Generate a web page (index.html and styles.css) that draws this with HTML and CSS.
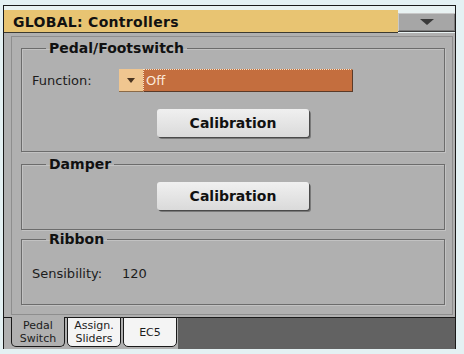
FILE: index.html
```html
<!DOCTYPE html>
<html lang="en">
<head>
    <meta charset="UTF-8">
    <title>GLOBAL: Controllers</title>
    <link rel="stylesheet" href="styles.css">
</head>
<body>
    <div class="window">
        <div class="title-row">
            <div class="title-bar">GLOBAL: Controllers</div>
            <button class="menu-btn"><span class="tri"></span></button>
        </div>
        <div class="panel">
            <div class="frame">
                <fieldset class="group group-pedal">
                    <legend>Pedal/Footswitch</legend>
                    <div class="field-row">
                        <span class="field-label">Function:</span>
                        <div class="select">
                            <span class="select-arrow"><span class="tri small"></span></span>
                            <span class="select-value">Off</span>
                        </div>
                    </div>
                    <div class="btn-row">
                        <button class="calib-btn">Calibration</button>
                    </div>
                </fieldset>
                <fieldset class="group group-damper">
                    <legend>Damper</legend>
                    <div class="btn-row">
                        <button class="calib-btn">Calibration</button>
                    </div>
                </fieldset>
                <fieldset class="group group-ribbon">
                    <legend>Ribbon</legend>
                    <div class="field-row">
                        <span class="field-label short">Sensibility:</span>
                        <span class="field-value">120</span>
                    </div>
                </fieldset>
            </div>
        </div>
        <div class="tabs">
            <div class="tab active">Pedal<br>Switch</div>
            <div class="tab">Assign.<br>Sliders</div>
            <div class="tab">EC5</div>
            <div class="tab-fill"></div>
        </div>
    </div>
</body>
</html>
```

FILE: styles.css
```css
body {
    margin: 0;
    background-color: #e4f1f3;
    font-family: 'DejaVu Sans', sans-serif;
    color: #111;
}

.window {
    margin: 5px 0 0 3px;
    width: 451px;
    border: 1px solid #1a1a1a;
    border-bottom: none;
}

.title-row {
    display: flex;
    padding-top: 4px;
    background: #e8f2f2;
}

.title-bar {
    flex: 1;
    height: 22px;
    line-height: 25px;
    padding-left: 9px;
    background: #e8c472;
    border-bottom: 1px solid #3c3a30;
    font-size: 14px;
    font-weight: bold;
    letter-spacing: 0.3px;
}

.menu-btn {
    width: 57px;
    height: 19px;
    margin-top: 3px;
    padding: 0;
    background: #a6a6a6;
    border: none;
    border-bottom: 1px solid #3c3c3c;
    box-shadow: inset 1px 1px 0 #c8c8c8, inset -1px -1px 0 #7c7c7c;
    display: flex;
    align-items: center;
    justify-content: center;
}

.tri {
    width: 0;
    height: 0;
    border-left: 7px solid transparent;
    border-right: 7px solid transparent;
    border-top: 6px solid #3a3a3a;
}

.tri.small {
    border-left-width: 4px;
    border-right-width: 4px;
    border-top: 5px solid #4a3420;
}

.panel {
    background: #b0b0b0;
    border-bottom: 1px solid #1a1a1a;
    padding: 3px 2px 2px 7px;
}

.frame {
    border: 1px solid #8e8e8e;
    padding: 3px 7px 9px 9px;
}

.group {
    margin: 0;
    padding: 0 10px;
    border: 1px solid #6c6c6c;
    box-shadow: inset 1px 1px 0 #c2c2c2, 1px 1px 0 #c2c2c2;
    min-width: 0;
}

.group legend {
    margin-left: 14px;
    padding: 0 3px;
    font-size: 14px;
    font-weight: bold;
    line-height: 16px;
}

.group-pedal {
    padding-bottom: 14px;
}

.group-pedal .field-row {
    margin-top: 13px;
}

.group-pedal .btn-row {
    margin-top: 17px;
}

.group-damper {
    margin-top: 4px;
    padding-bottom: 19px;
}

.group-damper .btn-row {
    margin-top: 10px;
}

.group-ribbon {
    margin-top: 1px;
    padding-bottom: 22px;
}

.group-ribbon .field-row {
    margin-top: 19px;
}

.field-row {
    display: flex;
    align-items: center;
    font-size: 13px;
    line-height: 16px;
    color: #1c1c1c;
}

.field-label {
    width: 87px;
}

.field-label.short {
    width: 90px;
}

.select {
    display: flex;
    width: 234px;
    height: 23px;
}

.select-arrow {
    width: 24px;
    background: #f0c690;
    display: flex;
    align-items: center;
    justify-content: center;
    border-bottom: 1px solid #8a6a48;
}

.select-value {
    flex: 1;
    background: #c46e3e;
    color: #fbeadb;
    padding-left: 2px;
    line-height: 22px;
    border-top: 1px dotted #f6e2c6;
    border-left: 1px dotted #f6e2c6;
    border-bottom: 1px solid #5a3a28;
    border-right: 1px solid #5a3a28;
}

.btn-row {
    display: flex;
    justify-content: center;
}

.calib-btn {
    width: 152px;
    height: 28px;
    padding: 0;
    border: none;
    border-radius: 3px;
    background: linear-gradient(#f0f0f0, #dadada);
    box-shadow: 1px 1px 0 #4a4a4a, 2px 2px 0 #7a7a7a;
    font-family: 'DejaVu Sans', sans-serif;
    font-size: 14px;
    font-weight: bold;
    color: #111;
}

.tabs {
    display: flex;
    height: 31px;
    background: #b0b0b0;
}

.tab {
    width: 52px;
    height: 28px;
    margin-top: -1px;
    margin-left: 2px;
    background: #f4f4f4;
    border: 1px solid #1a1a1a;
    border-radius: 0 0 5px 5px;
    font-size: 11px;
    line-height: 13px;
    text-align: center;
    display: flex;
    align-items: center;
    justify-content: center;
    color: #1c1c1c;
}

.tab.active {
    margin-left: 7px;
    border-top: none;
    margin-top: -1px;
    height: 29px;
    background: #b0b0b0;
}

.tab-fill {
    flex: 1;
    margin-left: 1px;
    background: #626262;
}
```
